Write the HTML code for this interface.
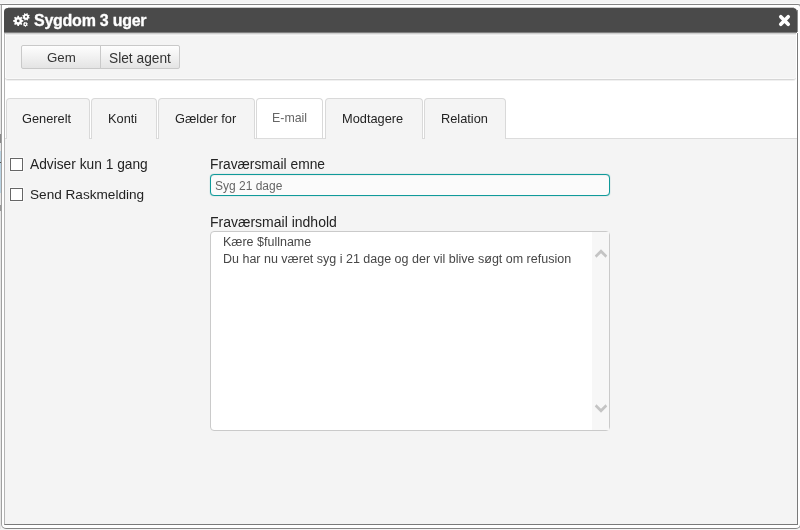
<!DOCTYPE html>
<html><head><meta charset="utf-8">
<style>
html,body{margin:0;padding:0;width:800px;height:530px;overflow:hidden;background:#f4f4f4;}
body{position:relative;font-family:"Liberation Sans",sans-serif;color:#232323;}
.abs{position:absolute;}
.t{position:absolute;white-space:nowrap;line-height:1;will-change:transform;}
#outer{position:absolute;left:1px;top:4px;width:800px;height:525px;box-sizing:border-box;border:1px solid #848484;border-left-color:#a0a0a0;border-radius:0 3px 5px 5px;background:#fff;}
#topline0{position:absolute;left:0;top:4px;width:2px;height:1px;background:#8f8f8f;}
#leftcol{position:absolute;left:0;top:5px;width:1px;height:524px;background:#e6e6e6;}
#frame{position:absolute;left:4px;top:33px;width:794px;height:492px;box-sizing:border-box;border-left:1px solid #b4b4b4;border-right:1px solid #7a7a7a;border-bottom:1px solid #7a7a7a;background:#fff;}
#hdr{position:absolute;left:4px;top:8px;width:793px;height:24px;background:#4a4a4a;border-radius:4px 4px 0 0;}
#rline{position:absolute;left:797px;top:10px;width:1px;height:22px;background:#8a8a8a;}
#hdrline{position:absolute;left:4px;top:32px;width:793px;height:1px;background:#7e7e7e;}
#toolbar{position:absolute;left:5px;top:33px;width:791px;height:47px;box-sizing:border-box;background:linear-gradient(#cdcdcd 0,#cdcdcd 1px,#e9e9e9 1px,#e9e9e9 2px,#f9f9f9 2px,#f9f9f9 3px,#f4f4f4 3px);border-bottom:1px solid #d6d6d6;border-radius:0 0 3px 3px;box-shadow:0 1px 0 #f0f0f0,inset 0 -1px 0 #f9f9f9;}
#tbhl{position:absolute;left:5px;top:34px;width:1px;height:44px;background:#fdfdfd;}
.btn{position:absolute;top:45px;height:24px;box-sizing:border-box;border:1px solid #c9c9c9;background:linear-gradient(#fefefe,#e4e4e4);}
#content{position:absolute;left:5px;top:139px;width:792px;height:385px;background:#f4f4f4;}
#tabline{position:absolute;left:5px;top:138px;width:792px;height:1px;background:#dcdcdc;}
.tab{position:absolute;top:98px;height:41px;box-sizing:border-box;border:1px solid #d9d9d9;border-bottom:none;border-radius:4px 4px 0 0;background:#f4f4f4;}
.tab.active{background:#fff;height:41px;border-bottom:1px solid #dcdcdc;}
.cb{position:absolute;left:10px;width:13px;height:13px;box-sizing:border-box;border:1px solid #666;background:#fff;box-shadow:0 0 0 1px rgba(255,255,255,0.55);}
#inp{position:absolute;left:210px;top:174px;width:400px;height:22px;box-sizing:border-box;border:1px solid #109a9a;box-shadow:0 0 1px rgba(16,154,154,0.7),inset 0 1px 1px rgba(0,0,0,0.05);border-radius:4px;background:#fbfbfb;}
#ta{position:absolute;left:210px;top:231px;width:400px;height:200px;box-sizing:border-box;border:1px solid #cacaca;border-radius:4px;background:#fff;}
#sb{position:absolute;left:381px;top:0px;width:17px;height:198px;background:#f7f7f7;}
</style></head>
<body>
<div class="abs" style="left:0;top:3px;width:800px;height:1px;background:#fafafa;"></div>
<div id="outer"></div>
<div id="topline0"></div>
<div id="leftcol"></div>
<div class="abs" style="left:0;top:134px;width:1px;height:9px;background:#8a8a8a;"></div>
<div class="abs" style="left:0;top:151px;width:1px;height:42px;background:#b9d3e3;"></div>
<div class="abs" style="left:0;top:162px;width:1px;height:1px;background:#555;"></div>
<div class="abs" style="left:0;top:205px;width:1px;height:6px;background:#999;"></div>

<div id="frame"></div>
<div class="abs" style="left:8px;top:7px;width:786px;height:1px;background:#c4c4c4;"></div>
<div id="hdr"></div>
<div id="rline"></div>
<div id="hdrline"></div>
<svg class="abs" style="left:12px;top:12px" width="20" height="17" viewBox="12 12 20 17">
  <g fill="#fff" fill-rule="evenodd">
    <path d="M17.22 17.13 L17.49 15.75 L18.91 15.75 L19.18 17.13 L20.17 17.54 L21.34 16.75 L22.35 17.76 L21.56 18.93 L21.97 19.92 L23.35 20.19 L23.35 21.61 L21.97 21.88 L21.56 22.87 L22.35 24.04 L21.34 25.05 L20.17 24.26 L19.18 24.67 L18.91 26.05 L17.49 26.05 L17.22 24.67 L16.23 24.26 L15.06 25.05 L14.05 24.04 L14.84 22.87 L14.43 21.88 L13.05 21.61 L13.05 20.19 L14.43 19.92 L14.84 18.93 L14.05 17.76 L15.06 16.75 L16.23 17.54Z M19.60 20.90 A1.4 1.4 0 1 0 16.80 20.90 A1.4 1.4 0 1 0 19.60 20.90Z"/>
    <path d="M28.89 17.09 L29.71 17.62 L29.35 18.60 L28.38 18.46 L27.84 19.05 L28.04 20.00 L27.10 20.44 L26.50 19.66 L25.71 19.69 L25.18 20.51 L24.20 20.15 L24.34 19.18 L23.75 18.64 L22.80 18.84 L22.36 17.90 L23.14 17.30 L23.11 16.51 L22.29 15.98 L22.65 15.00 L23.62 15.14 L24.16 14.55 L23.96 13.60 L24.90 13.16 L25.50 13.94 L26.29 13.91 L26.82 13.09 L27.80 13.45 L27.66 14.42 L28.25 14.96 L29.20 14.76 L29.64 15.70 L28.86 16.30Z M27.00 16.80 A1.0 1.0 0 1 0 25.00 16.80 A1.0 1.0 0 1 0 27.00 16.80Z"/>
    <path d="M27.22 24.86 L27.67 25.35 L27.23 26.00 L26.61 25.77 L26.09 26.07 L25.99 26.73 L25.21 26.79 L25.00 26.16 L24.45 25.94 L23.87 26.28 L23.33 25.71 L23.70 25.15 L23.52 24.58 L22.90 24.34 L23.01 23.56 L23.68 23.50 L24.01 23.01 L23.81 22.37 L24.49 21.97 L24.95 22.45 L25.54 22.41 L25.92 21.86 L26.65 22.14 L26.56 22.80 L26.97 23.23 L27.64 23.18 L27.87 23.93 L27.30 24.27Z M26.10 24.30 A0.7 0.7 0 1 0 24.70 24.30 A0.7 0.7 0 1 0 26.10 24.30Z"/>
  </g>
</svg>
<div class="t" style="left:33.6px;top:12.7px;font-size:16px;letter-spacing:-0.25px;font-weight:bold;color:#fff;-webkit-text-stroke:0.3px #fff;">Sygdom 3 uger</div>
<svg class="abs" style="left:778px;top:14px" width="13" height="13" viewBox="0 0 13 13">
  <path d="M2.8 2.8 L10.2 10.2 M10.2 2.8 L2.8 10.2" stroke="#fff" stroke-width="3.7" stroke-linecap="round"/>
</svg>

<div id="toolbar"></div>
<div id="tbhl"></div>
<div class="btn" style="left:21px;width:80px;border-radius:2px 0 0 2px;"></div>
<div class="btn" style="left:100px;width:80px;border-radius:0 2px 2px 0;"></div>
<div class="t" style="left:47px;top:50.5px;font-size:13.3px;color:#333;">Gem</div>
<div class="t" style="left:109px;top:51.6px;font-size:13.75px;color:#333;">Slet agent</div>

<div id="tabline"></div>
<div id="content"></div>
<div class="tab" style="left:6px;width:84px;"></div>
<div class="tab" style="left:91px;width:66px;"></div>
<div class="tab" style="left:158px;width:97px;"></div>
<div class="tab active" style="left:256px;width:67px;"></div>
<div class="tab" style="left:325px;width:98px;"></div>
<div class="tab" style="left:424px;width:82px;"></div>
<div class="t" style="left:22px;top:112.5px;font-size:12.8px;">Generelt</div>
<div class="t" style="left:108px;top:112.5px;font-size:12.8px;">Konti</div>
<div class="t" style="left:175px;top:112.5px;font-size:12.8px;">Gælder for</div>
<div class="t" style="left:272px;top:111.5px;font-size:12.4px;color:#666;">E-mail</div>
<div class="t" style="left:342px;top:112.5px;font-size:12.8px;">Modtagere</div>
<div class="t" style="left:441px;top:112.5px;font-size:12.8px;">Relation</div>

<div class="cb" style="top:158px;"></div>
<div class="cb" style="top:188px;"></div>
<div class="t" style="left:30.4px;top:158px;font-size:13.75px;">Adviser kun 1 gang</div>
<div class="t" style="left:30.4px;top:188px;font-size:13.6px;">Send Raskmelding</div>

<div class="t" style="left:210px;top:158px;font-size:13.8px;">Fraværsmail emne</div>
<div id="inp"></div>
<div class="t" style="left:215px;top:180px;font-size:12px;color:#666;">Syg 21 dage</div>
<div class="t" style="left:210px;top:214.5px;font-size:14px;">Fraværsmail indhold</div>
<div id="ta"><div id="sb"></div>
</div>
<svg class="abs" style="left:0;top:0" width="800" height="530" viewBox="0 0 800 530">
<path d="M594.8 255.6 L601 249.2 L607.2 255.6 L605.6 257.8 L601 253.2 L596.4 257.8Z" fill="#c4c4c4"/>
<path d="M594.8 406.4 L601 412.8 L607.2 406.4 L605.6 404.2 L601 408.8 L596.4 404.2Z" fill="#c4c4c4"/>
</svg>
<div class="t" style="left:223px;top:236px;font-size:12.5px;color:#474747;">Kære $fullname</div>
<div class="t" style="left:223px;top:252.7px;font-size:12.5px;color:#474747;">Du har nu været syg i 21 dage og der vil blive søgt om refusion</div>
</body></html>
